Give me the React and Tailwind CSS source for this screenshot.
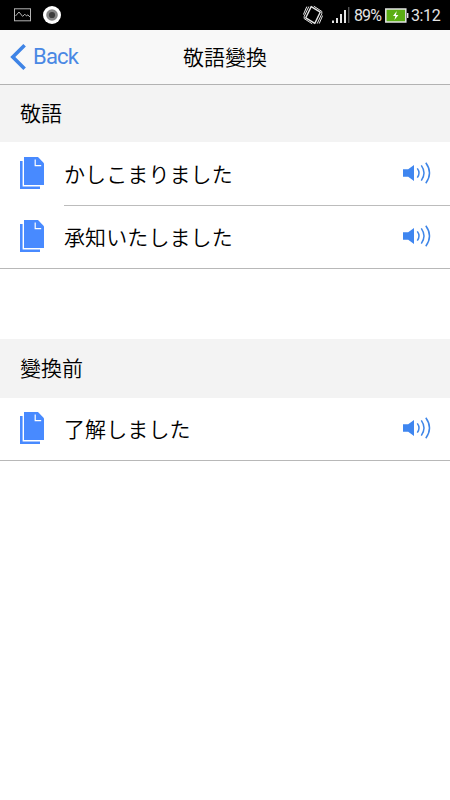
import React from 'react';

const sections = [
  {
    title: '敬語',
    headerClass: 'h-[57px]',
    items: ['かしこまりました', '承知いたしました'],
  },
  {
    title: '變換前',
    headerClass: 'h-[59px] mt-[70px]',
    items: ['了解しました'],
  },
];

const CopyIcon = () => (
  <svg width="24" height="32" viewBox="0 0 24 32" fill="#488aff" className="mb-[2px] shrink-0">
    <path d="M0 4h2.6v25.4H20V32H0z" />
    <path d="M4 0h14l6 6.2V28H4z" />
    <path d="M15.2 2.4v6.2h6" fill="none" stroke="#fff" strokeWidth="1.2" />
  </svg>
);

const SpeakerIcon = () => (
  <svg width="28" height="22" viewBox="0 0 28 22" fill="none" stroke="#3f86e8" strokeWidth="1.5" className="mb-[2px] shrink-0">
    <path d="M0 7.2h5.2L11 3v16l-5.8-4.2H0z" fill="#3f86f0" stroke="none" />
    <path d="M14.3 6.4q3.4 4.6 0 9.2" />
    <path d="M18.3 3.4q5.4 7.6 0 15.2" />
    <path d="M22.8 0.8q7.4 10.2 0 20.4" />
  </svg>
);

const StatusBar = () => (
  <div className="flex h-[30px] items-center justify-between bg-black pl-[14px] pr-[10px] text-[#e4e4e4]">
    <div className="flex items-center gap-[12px]">
      <svg width="17" height="14" viewBox="0 0 17 14" fill="none" stroke="#b4b4b4" strokeWidth="1">
        <rect x="0.5" y="0.8" width="16" height="12" />
        <path d="M1.5 8l3.5-4 3.6 4.4 2.2-2.2 1.8 1.8 1.3-1.2 2 2.2" />
      </svg>
      <svg width="18" height="18" viewBox="0 0 18 18">
        <circle cx="9" cy="9" r="9" fill="#fff" />
        <circle cx="9" cy="9" r="5.8" fill="#858585" />
        <circle cx="9" cy="9" r="3.1" fill="#3c3c3c" />
      </svg>
    </div>
    <div className="flex items-center">
      <svg width="20" height="20" viewBox="0 0 20 20" fill="none" stroke="#e4e4e4" strokeWidth="1">
        <path d="M8.2 1.6l9 5.6-5.4 11.2-9-5.6z" strokeWidth="1.4" strokeLinejoin="round" />
        <path d="M5.8 1.6L1.2 11.4v2.2l8 5.2M3.8 1.6L.4 9.6" />
        <path d="M14.2 18.6L18.8 8.8V6.4l-8-5.2M16.2 18.6l3.4-8" />
      </svg>
      <svg width="18" height="16" viewBox="0 0 18 16" className="ml-[9px]">
        <path d="M0 13.5h2V16H0zM4 11h2v5H4zM8 7h2v9H8zM12 3h2v13h-2z" fill="#e4e4e4" />
        <path d="M16 0h1.4v16H16z" fill="#555" />
      </svg>
      <span className="ml-[4px] mt-[2px] w-[28px] whitespace-nowrap text-[16px] leading-[20px] tracking-[-0.9px]">89%</span>
      <svg width="24" height="15" viewBox="0 0 24 15" className="ml-[3px]">
        <rect x="0.8" y="1" width="20" height="13" fill="#5bae14" stroke="#e4e4e4" strokeWidth="1.5" />
        <path d="M22 5h1.4v5H22z" fill="#e4e4e4" />
        <path d="M11.8 3L8 8h2.4l-1 4L13.4 7H10.9z" fill="#fff" />
      </svg>
      <span className="ml-[2px] mt-[2px] w-[29px] whitespace-nowrap text-[16px] leading-[20px] tracking-[-0.4px]">3:12</span>
    </div>
  </div>
);

const App = () => {
  return (
    <div className="min-h-screen bg-white font-['Roboto','Noto_Sans_CJK_JP',sans-serif] text-black">
      <StatusBar />

      {/* Nav bar */}
      <header className="grid h-[55px] grid-cols-3 items-center border-b border-[#b2b2b2] bg-[#f8f8f8]">
        <button className="flex items-center gap-[7px] pl-[10px] text-[#488aff]">
          <svg width="16" height="26" viewBox="0 0 16 26" fill="none" stroke="#3f84e6" strokeWidth="3.6">
            <path d="M14.6 1.3L2.8 13l11.8 11.7" />
          </svg>
          <span className="text-[22px] leading-[26px] tracking-[-0.8px] text-[#4a88e4]">Back</span>
        </button>
        <h1 className="pb-[2px] text-center font-['Noto_Sans_CJK_JP',sans-serif] text-[21px] font-[350] leading-[26px]">敬語變換</h1>
      </header>

      {sections.map((section) => (
        <section key={section.title} className="border-b border-[#b8b8b8] font-['Noto_Sans_CJK_JP',sans-serif] font-[350]">
          <div className={`flex items-center bg-[#f3f3f3] pb-[2px] pl-[20px] text-[21px] ${section.headerClass}`}>
            {section.title}
          </div>
          {section.items.map((item, index) => (
            <div key={item} className="flex h-[62px] items-center pl-[20px] [&:has(+&)]:h-[64px]">
              <CopyIcon />
              <div
                className={`ml-[20px] flex h-full flex-1 items-center justify-between pr-[19px] ${
                  index < section.items.length - 1 ? 'border-b border-[#bcbcbc]' : ''
                }`}
              >
                <span className="text-[21px] tracking-[0.1px]">{item}</span>
                <SpeakerIcon />
              </div>
            </div>
          ))}
        </section>
      ))}
    </div>
  );
};

export default App;
